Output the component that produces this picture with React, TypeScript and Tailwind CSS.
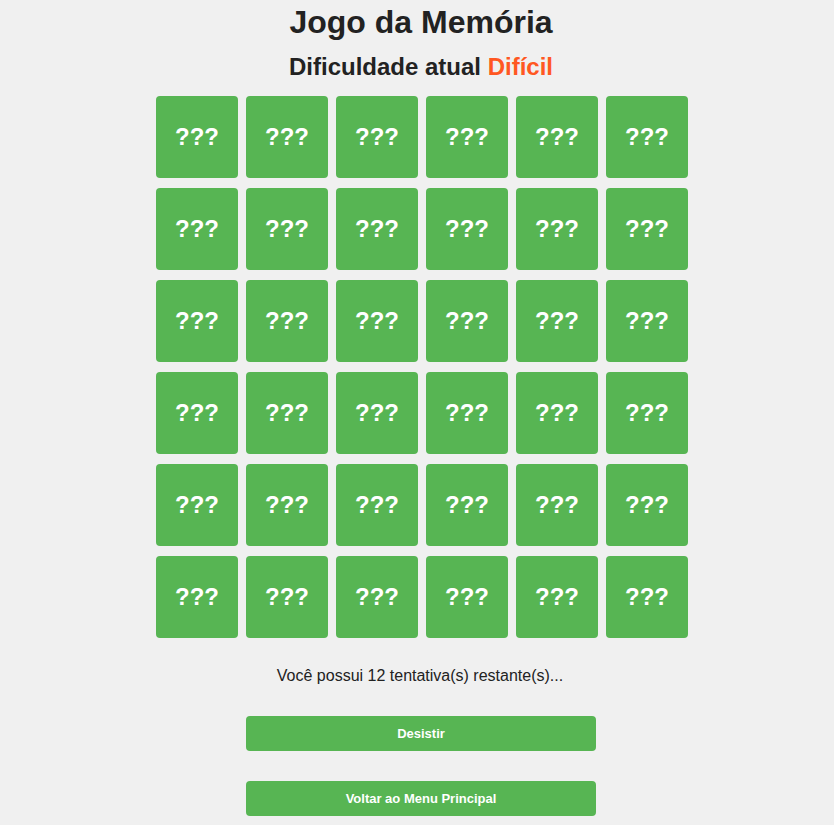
import React from "react";

const cards = Array.from({ length: 36 }, (_, i) => i);

const Card = () => {
    return <div className="w-[82px] h-[82px] rounded-[4px] bg-[#57b553] flex items-center justify-center text-white text-[24px] font-bold">
        ???
    </div>
};

export default function App() {
    return <div className="min-h-[825px] w-full bg-[#f0f0f0] pl-[8px] flex flex-col items-center text-[#222] font-['Liberation_Sans',Arial,sans-serif]">
        <h1 className="pt-[4px] text-[32px] leading-[37px] font-bold">Jogo da Memória</h1>
        <h2 className="mt-[12px] text-[24px] leading-[28px] font-bold">
            Dificuldade atual <span className="text-[#ff5722]">Difícil</span>
        </h2>

        <div className="mt-[15px] ml-[2px] grid grid-cols-6 gap-x-[8px] gap-y-[10px]">
            {cards.map((i) => <Card key={i} />)}
        </div>

        <p className="mt-[29px] -ml-[2px] text-[16px] leading-[18px]">Você possui 12 tentativa(s) restante(s)...</p>

        <button className="mt-[31px] w-[350px] h-[35px] rounded-[4px] bg-[#57b553] text-white text-[13px] font-bold">Desistir</button>
        <button className="mt-[30px] w-[350px] h-[35px] rounded-[4px] bg-[#57b553] text-white text-[13px] font-bold">Voltar ao Menu Principal</button>
    </div>
}
